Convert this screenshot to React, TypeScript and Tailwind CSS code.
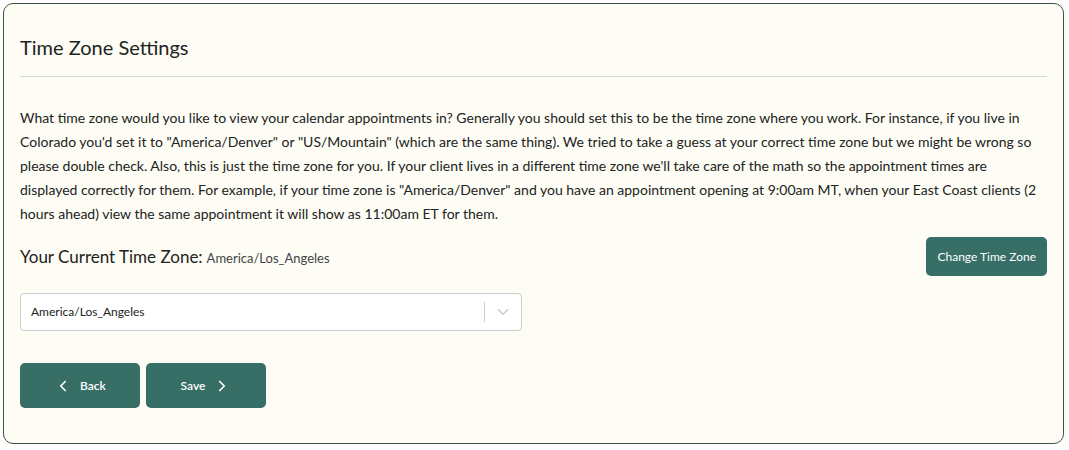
import { ChevronDown, ChevronLeft, ChevronRight } from 'lucide-react';

export default function App() {
  const font = { fontFamily: 'Lato, "Noto Sans", sans-serif' };

  return (
    <div className="bg-white w-[1069px] h-[450px] p-[3px]" style={font}>
      <div className="bg-[#fdfdf5] border border-[#3d5443] rounded-[10px] h-[441px] w-[1061px] px-4">
        {/* Header */}
        <div className="pt-[29px] pb-[15px] border-b border-[#d3dbe0]">
          <h2 className="text-[20px] leading-[28px] text-[#222]">Time Zone Settings</h2>
        </div>

        <p className="mt-[29px] text-[14px] leading-[24px] text-[#222]">
          What time zone would you like to view your calendar appointments in? Generally you should set this to be the time zone where you work. For instance, if you live in Colorado you'd set it to "America/Denver" or "US/Mountain" (which are the same thing). We tried to take a guess at your correct time zone but we might be wrong so please double check. Also, this is just the time zone for you. If your client lives in a different time zone we'll take care of the math so the appointment times are displayed correctly for them. For example, if your time zone is "America/Denver" and you have an appointment opening at 9:00am MT, when your East Coast clients (2 hours ahead) view the same appointment it will show as 11:00am ET for them.
        </p>

        {/* Current zone row */}
        <div className="mt-[11px] flex items-center justify-between">
          <div className="flex items-baseline gap-1">
            <span className="text-[17px] text-[#222]">Your Current Time Zone:</span>
            <span className="text-[13px] text-[#444]">America/Los_Angeles</span>
          </div>
          <button className="bg-[#376e65] text-white text-[12px] rounded-[5px] h-[39px] px-[11px]">
            Change Time Zone
          </button>
        </div>

        {/* Select */}
        <div className="mt-[17px] w-[502px] h-[38px] bg-white border border-[#cccccc] rounded-[4px] flex items-center">
          <span className="flex-1 pl-[10px] text-[12px] text-[#222]">America/Los_Angeles</span>
          <div className="w-px h-[20px] bg-[#cccccc]" />
          <div className="w-[36px] flex justify-center text-[#cccccc]">
            <ChevronDown size={18} strokeWidth={2} />
          </div>
        </div>

        {/* Buttons */}
        <div className="mt-[32px] flex gap-[6px]">
          <button className="bg-[#376e65] text-white text-[12px] font-semibold rounded-[5px] w-[120px] h-[45px] flex items-center justify-center gap-[8px]">
            <ChevronLeft size={18} strokeWidth={2.25} />
            <span>Back</span>
          </button>
          <button className="bg-[#376e65] text-white text-[12px] font-semibold rounded-[5px] w-[120px] h-[45px] flex items-center justify-center gap-[8px]">
            <span>Save</span>
            <ChevronRight size={18} strokeWidth={2.25} />
          </button>
        </div>
      </div>
    </div>
  );
}
